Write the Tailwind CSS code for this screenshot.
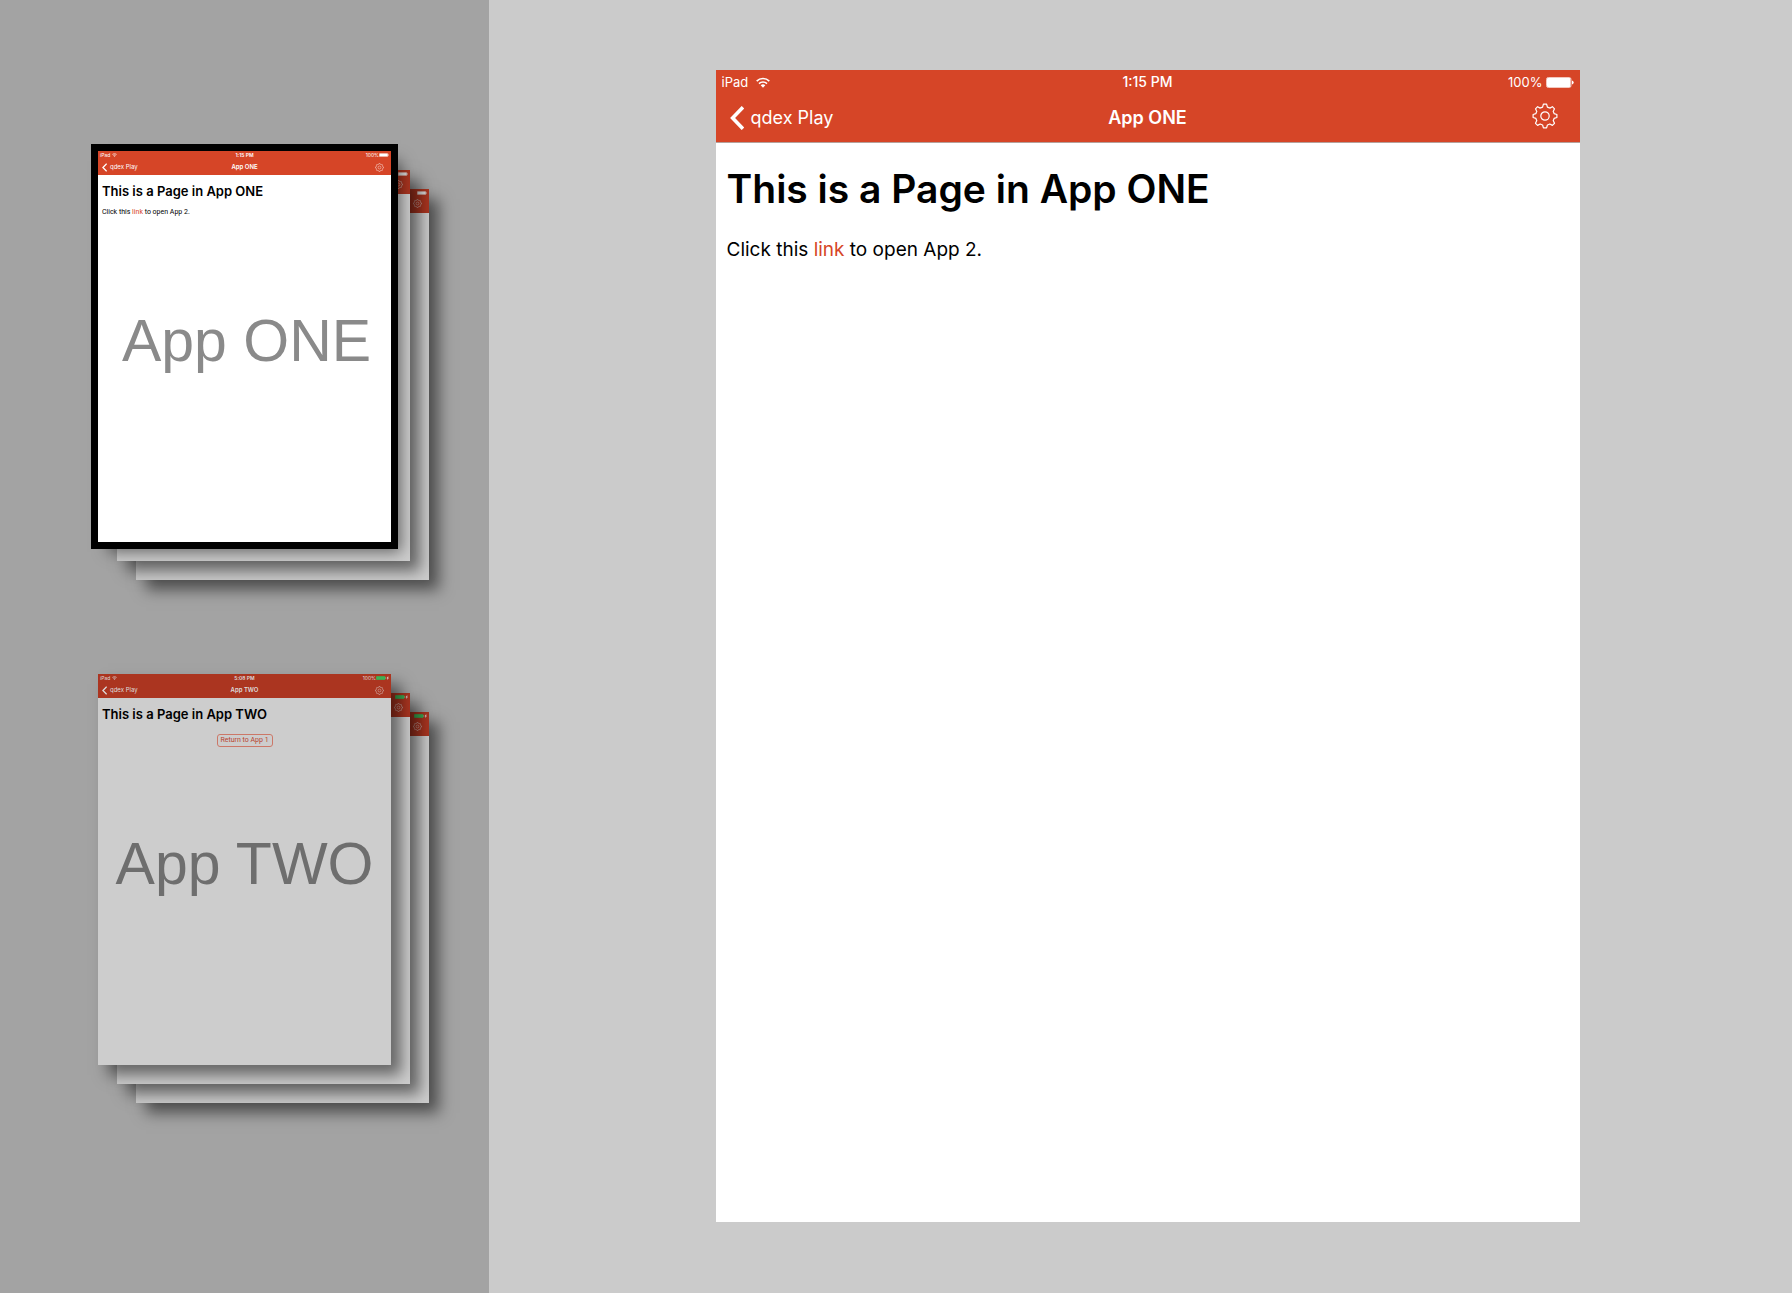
<!DOCTYPE html>
<html lang="en">
<head>
<meta charset="utf-8">
<meta name="viewport" content="width=device-width, initial-scale=1">
<title>App ONE</title>
<script src="https://cdn.jsdelivr.net/npm/@tailwindcss/browser@4"></script>
</head>
<body class="min-h-screen bg-[#cbcbcb] font-['Inter','Liberation_Sans',sans-serif] text-black">
<!-- Shared icons -->
<svg class="hidden" aria-hidden="true">
  <symbol id="wifi" viewBox="0 0 14 11"><g fill="none" stroke="currentColor" stroke-width="1.6"><path d="M.7 4.1a8.9 8.9 0 0 1 12.6 0"/><path d="M3 6.6a5.7 5.7 0 0 1 8 0"/></g><path d="M4.7 8.3a3.3 3.3 0 0 1 4.6 0L7 10.7z" fill="currentColor"/></symbol>
  <symbol id="back" viewBox="0 0 14 24"><path d="M13 1.2 2.6 12 13 22.8" fill="none" stroke="currentColor" stroke-width="3.6"/></symbol>
  <symbol id="gear" viewBox="0 0 26 26"><g fill="none" stroke="currentColor" stroke-width="1.2" stroke-linejoin="round"><circle cx="13" cy="13" r="4.2"/><path d="M11.4 1.2h3.2l.8 2.9q1.5.4 2.4 1l2.6-1.4 2.1 2.1-1.3 2.7q.6.9.9 2.2l2.8.8v3l-2.8.9q-.3 1.3-.9 2.2l1.3 2.7-2.1 2.1-2.6-1.4q-.9.6-2.4 1l-.8 2.8h-3.2l-.8-2.8q-1.5-.4-2.4-1l-2.6 1.4-2.1-2.1 1.3-2.7q-.6-.9-.9-2.2l-2.8-.9v-3l2.8-.8q.3-1.3.9-2.2L3.5 5.8l2.1-2.1 2.6 1.4q.9-.6 2.4-1z"/></g></symbol>
  <symbol id="battery" viewBox="0 0 28 11"><rect x=".5" y=".5" width="24.5" height="10" rx="1.8" fill="none" stroke="currentColor" opacity=".7"/><rect x="1" y="1" width="23.5" height="9" rx="1" fill="currentColor"/><path d="M26 3.6q1.7.5 1.7 1.9T26 7.4z" fill="currentColor"/></symbol>
  <symbol id="charging" viewBox="0 0 36 11"><rect x=".5" y=".5" width="25" height="10" rx="1.8" fill="#3cb255" stroke="#3cb255"/><path d="M26.5 4v3h1.5V4z" fill="currentColor"/><path d="M34 0l-4.5 6h2.2L31 11l4.8-6.5h-2.3z" fill="currentColor"/></symbol>
</svg>
<div class="flex min-h-screen">
  <aside class="flex w-[489px] shrink-0 flex-col gap-[132px] bg-[#a3a3a3] pt-[151px] pl-[98px]" aria-label="Open apps">

    <!-- App ONE stack -->
    <section class="relative h-[391px] w-[293px]" aria-label="App ONE">
      <div class="absolute top-[38px] left-[38px] h-full w-full bg-[#cdcdcd] shadow-[10px_10px_14px_rgba(0,0,0,0.5)]">
        <div class="flex h-6 flex-col items-end bg-[#ab3520] text-[#dddddd]">
          <svg class="mt-[2px] mr-[2px] h-[4px] w-[10px]"><use href="#battery"/></svg>
          <svg class="mt-1 mr-[7px] size-[9px]"><use href="#gear"/></svg>
        </div>
      </div>
      <div class="absolute top-[19px] left-[19px] h-full w-full bg-[#cdcdcd] shadow-[10px_10px_14px_rgba(0,0,0,0.5)]">
        <div class="flex h-6 flex-col items-end bg-[#ab3520] text-[#dddddd]">
          <svg class="mt-[2px] mr-[2px] h-[4px] w-[10px]"><use href="#battery"/></svg>
          <svg class="mt-1 mr-[7px] size-[9px]"><use href="#gear"/></svg>
        </div>
      </div>
      <div class="absolute inset-0 bg-white shadow-[10px_10px_14px_rgba(0,0,0,0.5)] outline-7 outline-black">
        <header class="flex h-6 flex-col bg-[#d64527] text-white">
          <div class="grid h-2 grid-cols-3 items-center px-[2px] text-[5px] leading-[8px]">
            <span class="flex items-center gap-[2px]">iPad <svg class="h-[4px] w-[5px]"><use href="#wifi"/></svg></span>
            <span class="text-center font-semibold">1:15 PM</span>
            <span class="flex items-center justify-end">100%<svg class="h-[4px] w-[10px]"><use href="#battery"/></svg></span>
          </div>
          <div class="grid h-4 grid-cols-3 items-center px-1 text-[6px] leading-[16px]">
            <a href="#" class="flex items-center gap-[3px]"><svg class="h-[9px] w-[5px]"><use href="#back"/></svg>qdex Play</a>
            <span class="text-center font-semibold">App ONE</span>
            <svg class="mr-[3px] size-[9px] justify-self-end"><use href="#gear"/></svg>
          </div>
        </header>
        <h2 class="mt-2 px-1 text-[13px] leading-[16px] font-semibold">This is a Page in App ONE</h2>
        <p class="mt-[9px] px-1 font-['Roboto',sans-serif] text-[7px] leading-[8px]">Click this <a href="#" class="text-[#d64527]">link</a> to open App 2.</p>
      </div>
      <div class="pointer-events-none absolute inset-0 flex items-center justify-center pb-[11px] pl-1 font-['Liberation_Sans',sans-serif] text-[59px] whitespace-nowrap text-[#8a8a8a]">App ONE</div>
    </section>

    <!-- App TWO stack -->
    <section class="relative h-[391px] w-[293px]" aria-label="App TWO">
      <div class="absolute top-[38px] left-[38px] h-full w-full bg-[#cdcdcd] shadow-[10px_10px_14px_rgba(0,0,0,0.5)]">
        <div class="flex h-6 flex-col items-end bg-[#ab3520] text-[#dddddd]">
          <svg class="mt-[2px] mr-[2px] h-[4px] w-[13px]"><use href="#charging"/></svg>
          <svg class="mt-1 mr-[7px] size-[9px]"><use href="#gear"/></svg>
        </div>
      </div>
      <div class="absolute top-[19px] left-[19px] h-full w-full bg-[#cdcdcd] shadow-[10px_10px_14px_rgba(0,0,0,0.5)]">
        <div class="flex h-6 flex-col items-end bg-[#ab3520] text-[#dddddd]">
          <svg class="mt-[2px] mr-[2px] h-[4px] w-[13px]"><use href="#charging"/></svg>
          <svg class="mt-1 mr-[7px] size-[9px]"><use href="#gear"/></svg>
        </div>
      </div>
      <div class="absolute inset-0 bg-[#cdcdcd] shadow-[10px_10px_14px_rgba(0,0,0,0.5)]">
        <header class="flex h-6 flex-col bg-[#ab3520] text-[#dddddd]">
          <div class="grid h-2 grid-cols-3 items-center px-[2px] text-[5px] leading-[8px]">
            <span class="flex items-center gap-[2px]">iPad <svg class="h-[4px] w-[5px]"><use href="#wifi"/></svg></span>
            <span class="text-center font-semibold">5:08 PM</span>
            <span class="flex items-center justify-end">100%<svg class="h-[4px] w-[13px]"><use href="#charging"/></svg></span>
          </div>
          <div class="grid h-4 grid-cols-3 items-center px-1 text-[6px] leading-[16px]">
            <a href="#" class="flex items-center gap-[3px]"><svg class="h-[9px] w-[5px]"><use href="#back"/></svg>qdex Play</a>
            <span class="text-center font-semibold">App TWO</span>
            <svg class="mr-[3px] size-[9px] justify-self-end"><use href="#gear"/></svg>
          </div>
        </header>
        <h2 class="mt-2 px-1 text-[13px] leading-[16px] font-semibold">This is a Page in App TWO</h2>
        <button type="button" class="mx-auto mt-3 block h-[13px] w-14 rounded-[3px] border border-[#cc7868] font-['Roboto',sans-serif] text-[7px] leading-[11px] whitespace-nowrap text-[#b8432f]">Return to App 1</button>
      </div>
      <div class="pointer-events-none absolute inset-0 flex items-center justify-center pb-[11px] font-['Liberation_Sans',sans-serif] text-[59px] whitespace-nowrap text-[#6e6e6e]">App TWO</div>
    </section>
  </aside>

  <!-- Selected app -->
  <main class="min-w-0 grow pt-[70px] pb-[71px] pl-[14px]">
    <article class="mx-auto aspect-[3/4] w-full max-w-[864px] bg-white">
      <header class="flex h-[73px] flex-col border-b border-[#b5a19c] bg-[#d64527] text-white">
        <div class="grid h-6 grid-cols-3 items-center px-[6px] text-[13px] leading-[24px]">
          <span class="flex items-center gap-2">iPad <svg class="h-[11px] w-[14px]"><use href="#wifi"/></svg></span>
          <span class="text-center text-[14px] font-medium">1:15 PM</span>
          <span class="flex items-center justify-end gap-[3px]">100%<svg class="h-[11px] w-7"><use href="#battery"/></svg></span>
        </div>
        <div class="grid h-12 grid-cols-3 items-center px-[14px] text-[18px] leading-[48px]">
          <a href="#" class="flex items-center gap-[7px]"><svg class="h-6 w-[14px]"><use href="#back"/></svg>qdex Play</a>
          <h1 class="text-center font-semibold">App ONE</h1>
          <button type="button" class="mr-[7px] justify-self-end pb-1" aria-label="Settings"><svg class="size-[26px]"><use href="#gear"/></svg></button>
        </div>
      </header>
      <h2 class="mt-[22px] px-[11px] text-[39px] leading-[48px] font-semibold">This is a Page in App ONE</h2>
      <p class="mt-[25px] px-[11px] text-[19px] leading-[24px]">Click this <a href="#" class="text-[#d64527]">link</a> to open App 2.</p>
    </article>
  </main>
</div>
</body>
</html>
